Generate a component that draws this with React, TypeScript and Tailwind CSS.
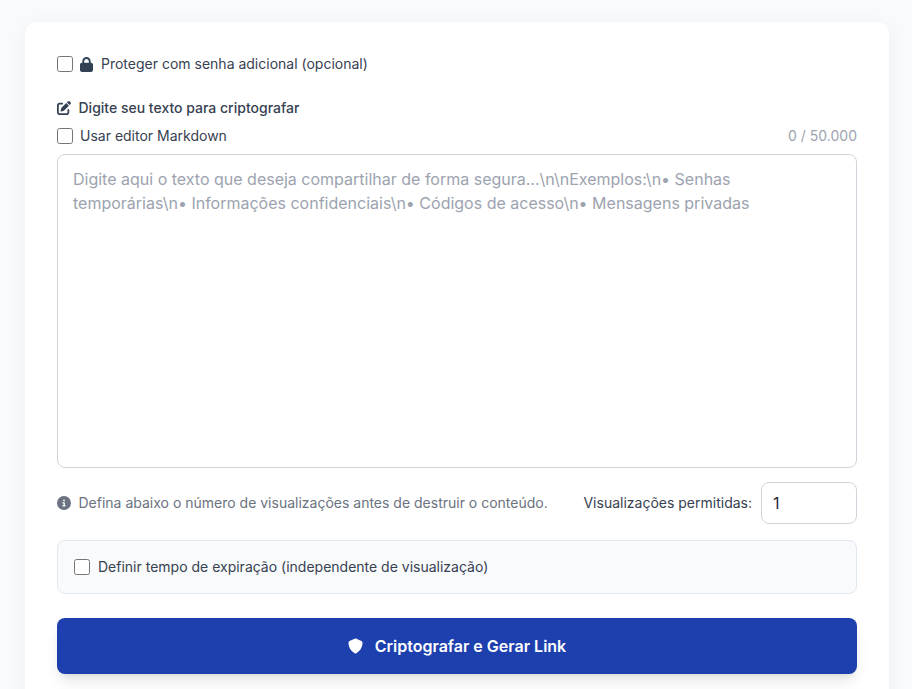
import { FaCircleInfo, FaLock, FaPenToSquare, FaShield } from 'react-icons/fa6'

export default function App() {
  return (
    <div className="h-[689px] overflow-hidden bg-[#f8fafc] px-[25px] pt-[22px] font-['Inter',sans-serif] text-[#374151] antialiased">
      <main className="h-[720px] w-[864px] rounded-xl bg-white px-8 pt-[34px] shadow-[0_4px_20px_rgba(0,0,0,0.05)]">
        <label className="flex h-4 items-center text-sm">
          <input type="checkbox" className="m-0 h-4 w-4" />
          <FaLock className="ml-[7px] h-[15px] w-[13px] text-[#334155]" />
          <span className="ml-2">Proteger com senha adicional (opcional)</span>
        </label>

        <div className="mt-[26px] flex h-[20px] items-center text-sm font-medium">
          <FaPenToSquare className="h-[14px] w-[14px] text-[#334155]" />
          <span className="ml-[7.5px]">Digite seu texto para criptografar</span>
        </div>

        <div className="mt-2 flex h-[20px] items-center justify-between text-sm">
          <label className="flex items-center">
            <input type="checkbox" className="m-0 h-4 w-4" />
            <span className="ml-[7px]">Usar editor Markdown</span>
          </label>
          <span className="text-[#9ca3af]">0 / 50.000</span>
        </div>

        <textarea
          className="mt-2 block h-[314px] w-full resize-none rounded-lg border border-[#d1d5db] bg-white px-[15px] py-3 text-base leading-6 outline-none placeholder:text-[#9ca3af]"
          placeholder="Digite aqui o texto que deseja compartilhar de forma segura...\n\nExemplos:\n• Senhas temporárias\n• Informações confidenciais\n• Códigos de acesso\n• Mensagens privadas"
        />

        <div className="mt-[14px] flex items-center justify-between">
          <p className="flex items-center text-sm text-[#6b7280]">
            <FaCircleInfo className="h-[14px] w-[14px]" />
            <span className="ml-[7.5px]">Defina abaixo o número de visualizações antes de destruir o conteúdo.</span>
          </p>
          <div className="flex items-center gap-[9px]">
            <span className="text-sm">Visualizações permitidas:</span>
            <input
              type="number"
              defaultValue={1}
              className="h-[42px] w-24 rounded-lg border border-[#d1d5db] bg-white px-[11px] text-base text-[#1f2937] outline-none"
            />
          </div>
        </div>

        <div className="mt-4 flex h-[54px] items-center rounded-lg border border-[#e2e8f0] bg-[#f8fafc] px-4 text-sm">
          <label className="flex items-center">
            <input type="checkbox" className="m-0 h-4 w-4" />
            <span className="ml-2">Definir tempo de expiração (independente de visualização)</span>
          </label>
        </div>

        <button className="mt-6 flex h-14 w-full items-center justify-center gap-3 rounded-lg bg-[#1e40af] font-semibold text-white shadow-lg">
          <FaShield className="h-4 w-[15px]" />
          <span>Criptografar e Gerar Link</span>
        </button>
      </main>
    </div>
  )
}
